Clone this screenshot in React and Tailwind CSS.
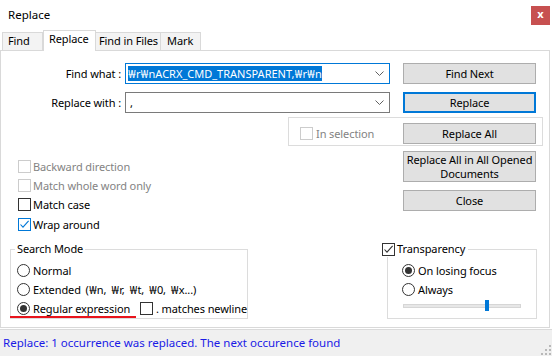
import React from "react";

function W() {
  return <span className="inline-block w-[8px] text-center font-['Noto_Sans',sans-serif]">₩</span>;
}

function Box({ checked, disabled, blue }) {
  const border = disabled
    ? "border-[#cccccc]"
    : blue
    ? "border-[#0078d7]"
    : "border-[#333333]";
  return (
    <span
      className={`flex h-[13px] w-[13px] shrink-0 items-center justify-center border bg-white ${border}`}
    >
      {checked && (
        <svg width="11" height="11" viewBox="0 0 11 11">
          <path
            d="M1.5 5.5 L4 8.2 L9.6 1.8"
            fill="none"
            stroke={blue ? "#0078d7" : "#333333"}
            strokeWidth="1.1"
          />
        </svg>
      )}
    </span>
  );
}

function Radio({ on }) {
  return (
    <span className="flex h-[13px] w-[13px] shrink-0 items-center justify-center rounded-full border border-[#333333] bg-white">
      {on && <span className="h-[7px] w-[7px] rounded-full bg-[#333333]" />}
    </span>
  );
}

function Button({ children, focus, className = "" }) {
  return (
    <div
      className={`flex w-[133px] shrink-0 items-center justify-center bg-[#e1e1e1] text-center ${
        focus ? "border-2 border-[#0078d7]" : "border border-[#adadad]"
      } ${className}`}
    >
      {children}
    </div>
  );
}

function Chevron() {
  return (
    <svg width="9" height="5" viewBox="0 0 9 5" className="shrink-0">
      <path d="M0.5 0.5 L4.5 4.5 L8.5 0.5" fill="none" stroke="#606060" strokeWidth="1" />
    </svg>
  );
}

export default function App() {
  return (
    <div className="flex h-[356px] w-[552px] flex-col overflow-hidden whitespace-nowrap bg-white font-['Noto_Sans','Noto_Sans_CJK_KR',sans-serif] text-[11px] leading-[16px] tracking-[-0.1px] text-black">
      {/* title bar */}
      <div className="flex h-[30px] shrink-0 items-center justify-between pl-[8px] pr-[2px]">
        <span className="text-[11.5px] tracking-normal">Replace</span>
        <span className="flex h-[19px] w-[19px] items-center justify-center bg-[#c75050] pb-[2px] text-[11px] font-bold text-white">
          x
        </span>
      </div>

      {/* tabs */}
      <div className="flex h-[20px] shrink-0 items-end pl-[2px]">
        <div className="h-[18px] w-[41px] border border-b-0 border-[#d9d9d9] bg-[#f3f3f3] pl-[5px]">Find</div>
        <div className="relative z-10 -mb-px h-[21px] w-[53px] border border-b-0 border-[#d9d9d9] bg-white pl-[5px]">
          Replace
        </div>
        <div className="h-[18px] w-[65px] border border-b-0 border-l-0 border-[#d9d9d9] bg-[#f3f3f3] pl-[3px]">
          Find in Files
        </div>
        <div className="h-[18px] w-[40px] border border-b-0 border-l-0 border-[#d9d9d9] bg-[#f3f3f3] pl-[6px]">Mark</div>
      </div>

      {/* panel */}
      <div className="flex h-[278px] w-[550px] shrink-0 flex-col border border-[#d9d9d9] pt-[12px]">
        <div className="flex h-[21px] items-center">
          <div className="w-[120px] text-right">Find what :</div>
          <div className="ml-[4px] flex h-[21px] w-[265px] items-center border border-[#0078d7] pl-[2px] pr-[5px]">
            <div className="flex-1 overflow-hidden">
              <span className="bg-[#0078d7] tracking-normal text-white">
                <W />r<W />nACRX_CMD_TRANSPARENT,<W />r<W />n
              </span>
            </div>
            <Chevron />
          </div>
          <Button className="ml-[13px] h-[21px]">Find Next</Button>
        </div>

        <div className="mt-[8px] flex h-[21px] items-center">
          <div className="w-[120px] text-right">Replace with :</div>
          <div className="ml-[4px] flex h-[21px] w-[265px] items-center border border-[#7a7a7a] pl-[4px] pr-[5px]">
            <div className="flex-1">,</div>
            <Chevron />
          </div>
          <Button focus className="ml-[13px] h-[21px]">
            Replace
          </Button>
        </div>

        <div className="ml-[287px] mt-[4px] flex h-[29px] w-[255px] items-start border border-[#dcdcdc] pt-[5px]">
          <div className="flex h-[21px] w-[114px] items-center gap-[3px] pl-[11px] text-[#838383]">
            <Box disabled />
            <span>In selection</span>
          </div>
          <Button className="h-[21px]">Replace All</Button>
        </div>

        <div className="mt-[5px] flex h-[90px]">
          <div className="flex w-[402px] flex-col pl-[17px] pt-[6px]">
            <div className="flex h-[19px] items-center gap-[2px] text-[#838383]">
              <Box disabled />
              <span>Backward direction</span>
            </div>
            <div className="flex h-[19px] items-center gap-[2px] text-[#838383]">
              <Box disabled />
              <span>Match whole word only</span>
            </div>
            <div className="flex h-[19px] items-center gap-[2px]">
              <Box />
              <span>Match case</span>
            </div>
            <div className="mt-[1px] flex h-[19px] items-center gap-[2px]">
              <Box checked blue />
              <span>Wrap around</span>
            </div>
          </div>
          <div className="flex flex-col">
            <Button className="h-[31px] leading-[14px]">
              Replace All in All Opened
              <br />
              Documents
            </Button>
            <Button className="mt-[8px] h-[21px]">Close</Button>
          </div>
        </div>

        <div className="flex">
          <fieldset className="ml-[9px] h-[78px] w-[238px] border border-[#dcdcdc]">
            <legend className="ml-[4px] px-[2px]">Search Mode</legend>
            <div className="flex flex-col pl-[6px] pt-[4px]">
              <div className="flex h-[19px] items-center gap-[3px]">
                <Radio />
                <span>Normal</span>
              </div>
              <div className="flex h-[19px] items-center gap-[3px]">
                <Radio />
                <span className="[word-spacing:2px]">
                  Extended (<W />n, <W />r, <W />t, <W />0, <W />x...)
                </span>
              </div>
              <div className="relative flex h-[19px] items-center">
                <div className="flex w-[123px] items-center gap-[3px]">
                  <Radio on />
                  <span>Regular expression</span>
                </div>
                <Box />
                <span className="ml-[3px]">. matches newline</span>
                <span className="absolute bottom-0 left-[-7px] h-[2px] w-[126px] bg-[#e8141c]" />
              </div>
            </div>
          </fieldset>

          <fieldset className="ml-[139px] h-[78px] w-[150px] border border-[#dcdcdc]">
            <legend className="-ml-[6px] flex items-center gap-[2px] pr-[3px]">
              <Box checked />
              <span>Transparency</span>
            </legend>
            <div className="flex flex-col pl-[14px] pt-[4px]">
              <div className="flex h-[19px] items-center gap-[3px]">
                <Radio on />
                <span>On losing focus</span>
              </div>
              <div className="flex h-[19px] items-center gap-[3px]">
                <Radio />
                <span>Always</span>
              </div>
              <div className="relative ml-[1px] mt-[1px] h-[12px] w-[118px]">
                <div className="absolute left-0 right-0 top-[4px] h-[4px] border border-[#d6d6d6] bg-[#e7e7e7]" />
                <div className="absolute left-[82px] top-0 h-[11px] w-[4px] bg-[#0078d7]" />
              </div>
            </div>
          </fieldset>
        </div>
      </div>

      {/* status bar */}
      <div className="mt-[1px] flex h-[27px] shrink-0 items-center justify-between border-t border-[#dadada] bg-[#f0f0f0] pl-[3px]">
        <span className="text-[11.5px] tracking-normal text-[#1a1ae6]">
          Replace: 1 occurrence was replaced. The next occurence found
        </span>
        <svg width="12" height="12" viewBox="0 0 12 12" className="self-end">
          <rect x="9" y="1" width="2" height="2" fill="#b8b8b8" />
          <rect x="5" y="5" width="2" height="2" fill="#b8b8b8" />
          <rect x="9" y="5" width="2" height="2" fill="#b8b8b8" />
          <rect x="1" y="9" width="2" height="2" fill="#b8b8b8" />
          <rect x="5" y="9" width="2" height="2" fill="#b8b8b8" />
          <rect x="9" y="9" width="2" height="2" fill="#b8b8b8" />
        </svg>
      </div>
    </div>
  );
}
